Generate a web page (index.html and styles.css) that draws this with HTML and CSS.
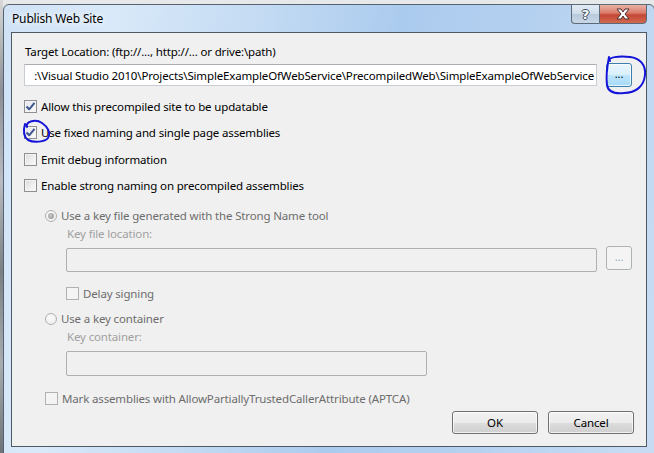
FILE: index.html
```html
<!DOCTYPE html>
<html>
<head>
<meta charset="utf-8">
<link rel="stylesheet" href="styles.css">
</head>
<body>
<div class="screen">
  <div class="backdrop"></div>
  <div class="window">
    <div class="titlebar">
      <span class="title">Publish Web Site</span>
      <div class="caption-btns">
        <span class="cap help">?</span>
        <span class="cap close">
          <svg width="16" height="12" viewBox="0 0 16 12"><path d="M2,1 L6,1 L8,4 L10,1 L14,1 L10,6 L14,11 L10,11 L8,8 L6,11 L2,11 L6,6 Z" fill="#fff" stroke="#4a3030" stroke-width="1" stroke-linejoin="round"/></svg>
        </span>
      </div>
    </div>
    <div class="frame-body">
      <div class="client">
        <div class="lbl target-lbl">Target Location: (ftp://..., http://... or drive:\path)</div>
        <div class="path-row">
          <div class="textbox path-box"><span class="path-text">:\Visual Studio 2010\Projects\SimpleExampleOfWebService\PrecompiledWeb\SimpleExampleOfWebService</span></div>
          <span class="btn browse focused">...</span>
        </div>
        <div class="checks">
          <div class="check"><span class="box checked"><svg width="11" height="11" viewBox="0 0 11 11"><path d="M1.5,5.5 L4.2,8.3 L9.5,1.8" fill="none" stroke="#3f5590" stroke-width="2" stroke-linejoin="round"/></svg></span><span>Allow this precompiled site to be updatable</span></div>
          <div class="check"><span class="box checked"><svg width="11" height="11" viewBox="0 0 11 11"><path d="M1.5,5.5 L4.2,8.3 L9.5,1.8" fill="none" stroke="#3f5590" stroke-width="2" stroke-linejoin="round"/></svg></span><span>Use fixed naming and single page assemblies</span></div>
          <div class="check"><span class="box"></span><span>Emit debug information</span></div>
          <div class="check"><span class="box"></span><span>Enable strong naming on precompiled assemblies</span></div>
        </div>
        <div class="strong-group">
          <div class="check radio-row dis"><span class="radio on"><span class="dot"></span></span><span>Use a key file generated with the Strong Name tool</span></div>
          <div class="lbl sub-lbl">Key file location:</div>
          <div class="key-row">
            <div class="textbox dis-box keyfile-box"></div>
            <span class="btn browse disabled">...</span>
          </div>
          <div class="check dis delay"><span class="box dis-chk"></span><span>Delay signing</span></div>
          <div class="check radio-row dis container-radio"><span class="radio"></span><span>Use a key container</span></div>
          <div class="lbl sub-lbl">Key container:</div>
          <div class="textbox dis-box container-box"></div>
          <div class="check dis aptca"><span class="box dis-chk"></span><span>Mark assemblies with AllowPartiallyTrustedCallerAttribute (APTCA)</span></div>
        </div>
        <div class="actions">
          <span class="btn push">OK</span>
          <span class="btn push">Cancel</span>
        </div>
      </div>
    </div>
  </div>
  <svg class="ink" width="654" height="453" viewBox="0 0 654 453">
    <path d="M610,61 C607,57 619,56 630,57 C640,58 646,65 645,75 C644,86 636,93 624,93 C614,94 608,92 607,85 C606,77 607,67 609,57" fill="none" stroke="#1414d8" stroke-width="2" stroke-linecap="round"/>
    <path d="M27,127 C25,121 36,119 42,123 C48,127 51,133 48,138 C45,142 34,143 28,140 C24,137 23,131 25,124" fill="none" stroke="#1414d8" stroke-width="2" stroke-linecap="round"/>
  </svg>
</div>
</body>
</html>
```

FILE: styles.css
```css
html, body {
  margin: 0;
  padding: 0;
}
body {
  width: 654px;
  height: 453px;
  overflow: hidden;
  background: #e6e8ea;
  font-family: "Noto Sans", "Open Sans", sans-serif;
  font-size: 11.5px;
  letter-spacing: -0.15px;
  color: #000;
}
.screen {
  position: relative;
  width: 654px;
  height: 453px;
  overflow: hidden;
  display: flex;
  align-items: flex-start;
}
.backdrop {
  width: 3px;
  height: 453px;
  flex: none;
  background: linear-gradient(180deg, #d8d8d8 0%, #8c9096 20%, #b8bcc0 40%, #7a7f85 60%, #a8acb0 80%, #6e7378 100%);
}
.window {
  flex: none;
  width: 652px;
  height: 452px;
  margin-top: 4px;
  box-sizing: border-box;
  border: 1px solid #58626e;
  border-radius: 6px 6px 0 0;
  background: linear-gradient(100deg, #cfe2f6 0%, #d9e9f9 15%, #c4dbf3 35%, #abcbee 55%, #b6d1f0 75%, #c8ddf4 100%);
  display: flex;
  flex-direction: column;
}
.titlebar {
  height: 27px;
  display: flex;
  align-items: flex-start;
  justify-content: space-between;
  flex: none;
}
.title {
  margin-left: 8px;
  margin-top: 6px;
  line-height: 16px;
  font-size: 12px;
  color: #000;
  text-shadow: 0 0 6px #fff, 0 0 10px rgba(255,255,255,0.9);
}
.caption-btns {
  display: flex;
  margin-right: 7px;
  margin-top: -1px;
}
.cap {
  height: 20px;
  box-sizing: border-box;
  border: 1px solid #5d6a78;
  display: flex;
  align-items: center;
  justify-content: center;
}
.help {
  width: 28px;
  border-right: none;
  border-radius: 0 0 0 4px;
  background: linear-gradient(180deg, #e2ebf5 0%, #cfdcea 50%, #b8c9dc 51%, #c9d8e8 100%);
  color: #fff;
  font-family: "DejaVu Sans", sans-serif;
  font-weight: bold;
  font-size: 13px;
  letter-spacing: 0;
  text-shadow: -1px 0 #3d4a58, 1px 0 #3d4a58, 0 -1px #3d4a58, 0 1px #3d4a58;
}
.close {
  width: 48px;
  border-radius: 0 0 4px 0;
  background: linear-gradient(180deg, #eab2a4 0%, #d97a68 45%, #c44634 55%, #d06a50 100%);
}
.frame-body {
  flex: 1;
  padding: 0 7px 0 7px;
  display: flex;
}
.client {
  flex: 1;
  height: 415px;
  box-sizing: border-box;
  border: 1px solid #4e5966;
  background: #f0f0f0;
  display: flex;
  flex-direction: column;
  align-items: flex-start;
}
.lbl {
  line-height: 15px;
  white-space: nowrap;
}
.target-lbl {
  margin-top: 11px;
  margin-left: 13px;
}
.path-row {
  margin-top: 4px;
  display: flex;
  align-items: flex-start;
}
.textbox {
  box-sizing: border-box;
  background: #fff;
  border: 1px solid #c8cdd4;
  border-top-color: #abadb3;
}
.path-box {
  margin-left: 12px;
  margin-top: 1px;
  width: 573px;
  height: 22px;
  display: flex;
  justify-content: flex-end;
  align-items: center;
  overflow: hidden;
  padding: 0 2px;
}
.path-text {
  white-space: nowrap;
  flex: none;
}
.btn {
  box-sizing: border-box;
  display: flex;
  align-items: center;
  justify-content: center;
  border: 1px solid #707070;
  border-radius: 3px;
  background: linear-gradient(180deg, #f2f2f2 0%, #ebebeb 50%, #dddddd 51%, #cfcfcf 100%);
  box-shadow: inset 0 0 0 1px rgba(255,255,255,0.7);
  line-height: 14px;
}
.browse {
  width: 26px;
  height: 24px;
  margin-left: 9px;
  font-size: 11px;
  padding-bottom: 2px;
}
.browse.focused {
  border-color: #3c7fb1;
  background: linear-gradient(180deg, #eaf6fd 0%, #d9f0fc 50%, #bee6fd 51%, #a7d9f5 100%);
}
.browse.disabled {
  border-color: #adb2b5;
  background: #f4f4f4;
  box-shadow: none;
  color: #9aa0b8;
  margin-left: 9px;
}
.checks {
  margin-top: 13px;
  margin-left: 12px;
  display: flex;
  flex-direction: column;
  gap: 13.4px;
}
.check {
  display: flex;
  align-items: center;
  height: 13px;
  gap: 4px;
  white-space: nowrap;
  line-height: 15px;
}
.box {
  width: 13px;
  height: 13px;
  flex: none;
  box-sizing: border-box;
  border: 1px solid #8e8f8f;
  background: linear-gradient(135deg, #dadada 0%, #f0f0f0 60%, #fafafa 100%);
  box-shadow: inset 0 0 0 1px #f4f4f4;
  display: flex;
  align-items: center;
  justify-content: center;
}
.box.checked {
  background: linear-gradient(135deg, #e2e6ef 0%, #f4f4f4 70%, #fbfbfb 100%);
}
.dis {
  color: #6d6d6d;
}
.box.dis-chk {
  border-color: #b1b1b1;
  background: #f4f4f4;
  box-shadow: none;
}
.strong-group {
  margin-left: 33px;
  display: flex;
  flex-direction: column;
  align-items: flex-start;
}
.radio-row {
  margin-top: 17px;
  gap: 4px;
}
.radio {
  width: 12px;
  height: 12px;
  flex: none;
  box-sizing: border-box;
  border-radius: 50%;
  border: 1px solid #b1b1b1;
  background: radial-gradient(circle at 40% 40%, #fbfbfb 0%, #eaeaea 100%);
  display: flex;
  align-items: center;
  justify-content: center;
}
.radio .dot {
  width: 6px;
  height: 6px;
  border-radius: 50%;
  background: radial-gradient(circle at 40% 40%, #c8c8c8 0%, #8e8e8e 100%);
}
.sub-lbl {
  color: #a0a0a0;
  margin-left: 22px;
  margin-top: 4px;
}
.key-row {
  margin-top: 5px;
  margin-left: 21px;
  display: flex;
  align-items: flex-start;
}
.dis-box {
  background: #f0f0f0;
  border: 1px solid #b0b0b0;
  border-radius: 2px;
}
.keyfile-box {
  width: 531px;
  height: 24px;
  margin-top: 2px;
}
.delay {
  margin-top: 15px;
  margin-left: 21px;
}
.container-radio {
  margin-top: 12px;
}
.container-box {
  margin-top: 7px;
  margin-left: 21px;
  width: 361px;
  height: 25px;
}
.aptca {
  margin-top: 16px;
}
.actions {
  align-self: stretch;
  display: flex;
  justify-content: flex-end;
  gap: 10px;
  margin-top: 6px;
  margin-right: 12px;
}
.push {
  width: 86px;
  height: 23px;
}
.ink {
  position: absolute;
  left: 0;
  top: 0;
  pointer-events: none;
}
```
